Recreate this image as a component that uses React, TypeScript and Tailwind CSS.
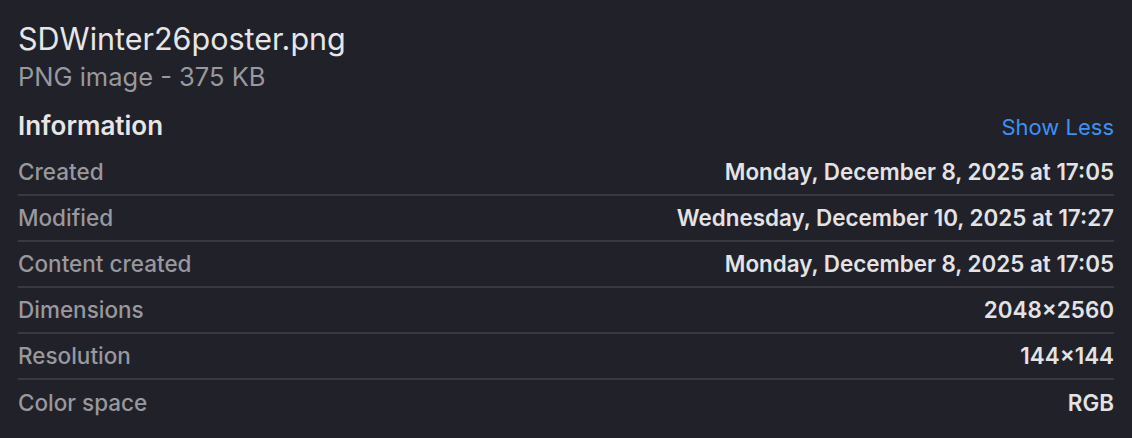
const rows = [
  { label: 'Created', value: 'Monday, December 8, 2025 at 17:05' },
  { label: 'Modified', value: 'Wednesday, December 10, 2025 at 17:27' },
  { label: 'Content created', value: 'Monday, December 8, 2025 at 17:05' },
  { label: 'Dimensions', value: '2048×2560' },
  { label: 'Resolution', value: '144×144' },
  { label: 'Color space', value: 'RGB' },
]

export default function App() {
  return (
    <div
      className="w-[1132px] h-[438px] bg-[#212129] px-[18px] pt-[21px] overflow-hidden"
      style={{ fontFamily: 'Inter, "Noto Sans", sans-serif' }}
    >
      <div className="text-[30.5px] leading-[36px] text-[#e6e6e8]">SDWinter26poster.png</div>
      <div className="text-[25.5px] leading-[30px] mt-[5px] text-[#98989e]">PNG image - 375 KB</div>

      <div className="flex items-baseline justify-between mt-[19px]">
        <div className="text-[26px] leading-[30px] font-semibold text-[#e6e6e8]">Information</div>
        <button className="text-[22px] leading-[30px] text-[#3a92f5]">Show Less</button>
      </div>

      <div className="mt-[8px]">
        {rows.map((r, i) => (
          <div
            key={r.label}
            className={`flex items-center justify-between h-[46px] ${
              i < rows.length - 1 ? 'border-b-2 border-[#393941]' : ''
            }`}
          >
            <span className="text-[22.5px] font-medium text-[#98989e]">{r.label}</span>
            <span className="text-[22.4px] font-semibold text-[#e3e3e5]">{r.value}</span>
          </div>
        ))}
      </div>
    </div>
  )
}
